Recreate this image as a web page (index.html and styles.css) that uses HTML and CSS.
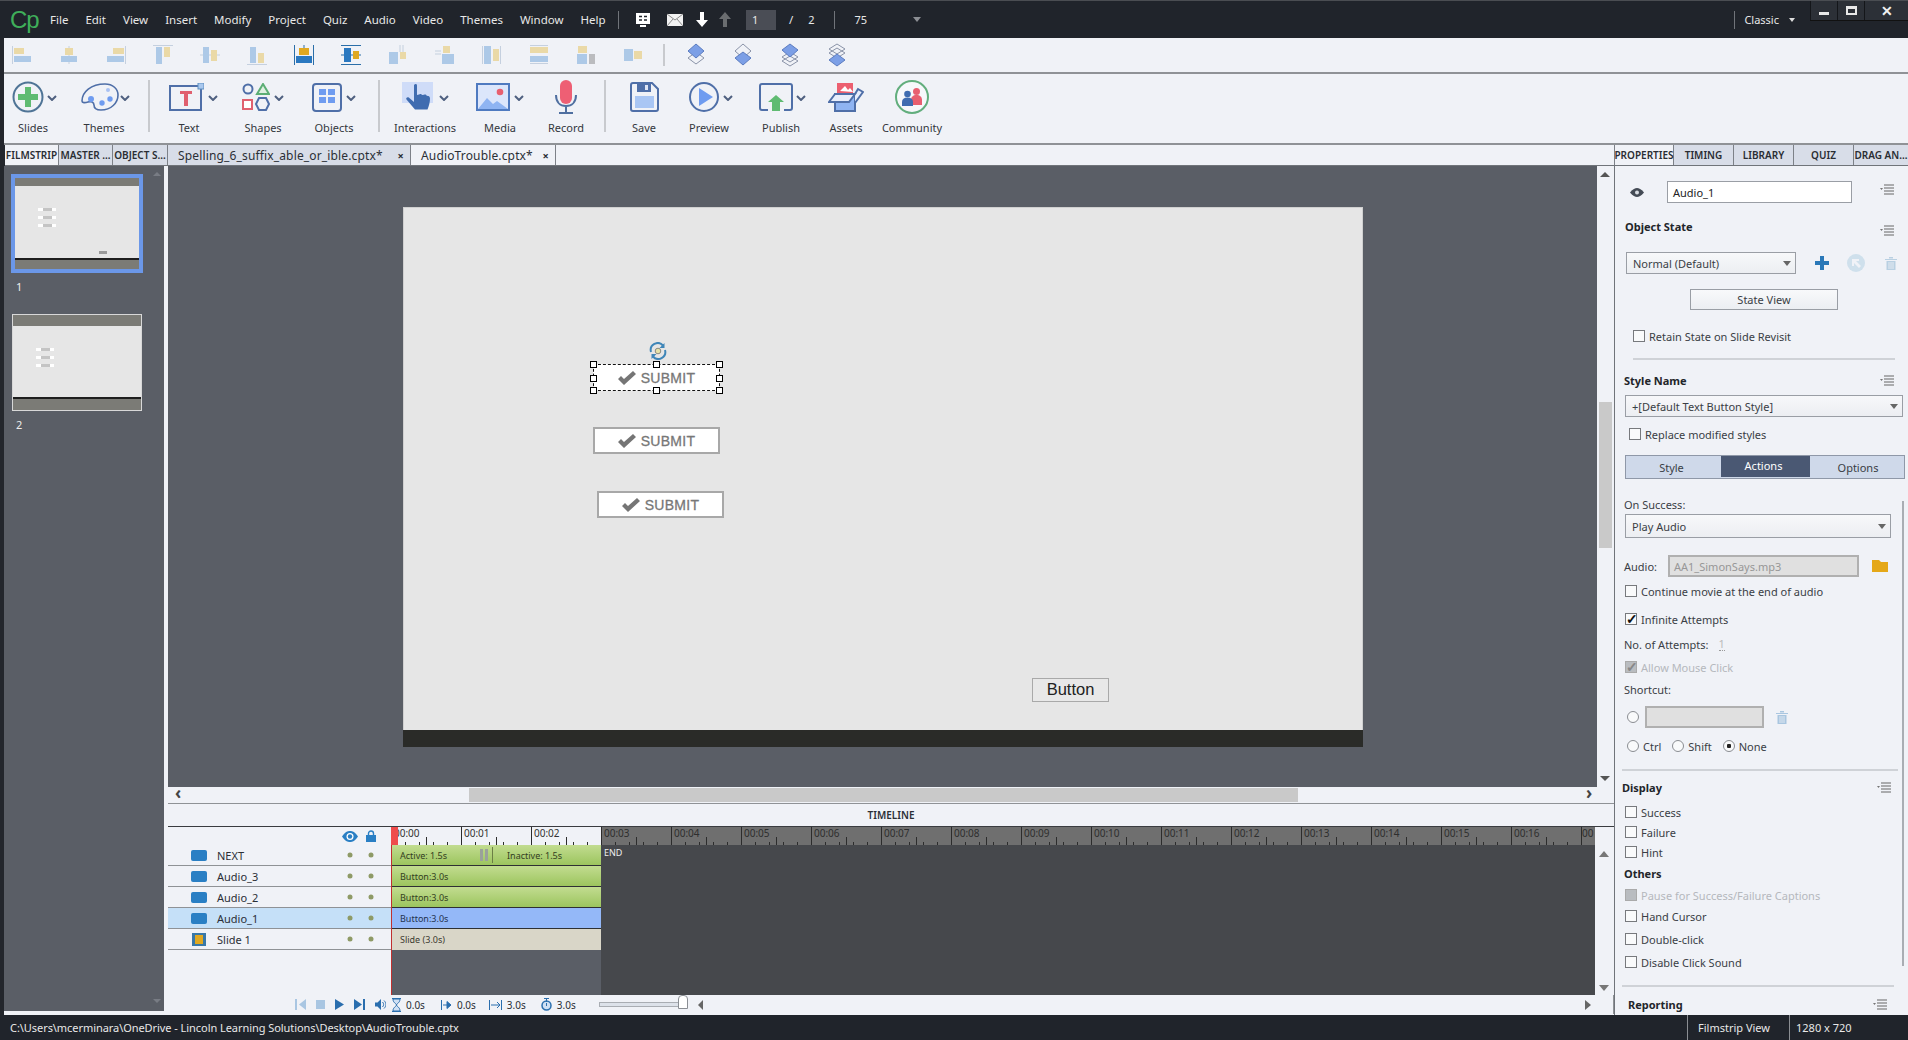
FILE: index.html
```html
<!DOCTYPE html>
<html lang="en">
<head>
  <meta charset="UTF-8">
  <title>Adobe Captivate - AudioTrouble.cptx</title>
  <link rel="stylesheet" href="styles.css">
</head>
<body>
  <svg class="sprite" width="0" height="0">
    <symbol id="chev" viewBox="0 0 10 6"><path d="M1 1l4 4 4-4" fill="none" stroke="#4f6080" stroke-width="2"/></symbol>
    <symbol id="lines" viewBox="0 0 14 11"><path d="M0 4h3L1.500 6z" fill="#777"/><path d="M4 1h10M4 4h10M4 7h10M4 10h10" stroke="#666" stroke-width="1" fill="none"/></symbol>
    <symbol id="trash" viewBox="0 0 12 13"><path d="M0 2h12v1H0zM4 0h4v1.500H4zM1.500 4h9v9h-9z" fill="currentColor"/><path d="M4 5v7M6 5v7M8 5v7" stroke="#f0f2f7" stroke-width=".8"/></symbol>
    <symbol id="check" viewBox="0 0 18 14"><path d="M0 8l3-3 3 3 9-8 3 3L6 14z" fill="#757575"/></symbol>
    <symbol id="rowdot" viewBox="0 0 6 6"><circle cx="3" cy="3" r="2.500" fill="#8e9a66"/></symbol>
  </svg>

  <header class="titlebar">
    <span class="logo">Cp</span>
    <nav class="menu">
      <span>File</span><span>Edit</span><span>View</span><span>Insert</span><span>Modify</span><span>Project</span><span>Quiz</span><span>Audio</span><span>Video</span><span>Themes</span><span>Window</span><span>Help</span>
    </nav>
    <i class="vsep sep-help"></i>
    <svg class="tb-icon tb-slide" width="16" height="16" viewBox="0 0 16 16"><path d="M1 1h14v11H1z" fill="#fff"/><path d="M5 13h6v2H5z" fill="#fff"/><path d="M4 4.500h3M9 4.500h3M4 8h3M9 8h3" stroke="#20242b" stroke-width="1.300"/></svg>
    <svg class="tb-icon tb-mail" width="16" height="14" viewBox="0 0 16 14"><path d="M0 1h16v12H0z" fill="#f2f2f2"/><path d="M0 1l8 6 8-6M0 13l6-7M16 13l-6-7" fill="none" stroke="#8b8b8b"/></svg>
    <svg class="tb-icon tb-down" width="12" height="15" viewBox="0 0 12 15"><path d="M4 0h4v8h4l-6 7-6-7h4z" fill="#fff"/></svg>
    <svg class="tb-icon tb-up" width="12" height="15" viewBox="0 0 12 15"><path d="M4 15h4V7h4L6 0 0 7h4z" fill="#6a6d70"/></svg>
    <span class="page-box">1</span>
    <span class="page-of">/</span>
    <span class="page-total">2</span>
    <i class="vsep sep-page"></i>
    <span class="zoom-val">75</span>
    <span class="caret caret-zoom"></span>
    <span class="spacer"></span>
    <i class="vsep sep-classic"></i>
    <span class="classic">Classic</span>
    <span class="caret caret-classic"></span>
    <div class="winbtns">
      <span class="winbtn"><i class="win-min"></i></span>
      <span class="winbtn"><i class="win-max"></i></span>
      <span class="winbtn win-x">✕</span>
    </div>
  </header>

  <div class="aligns">
    <svg class="faded" viewBox="0 0 20 20"><path d="M.500 1v18" stroke="#9cb0c8"/><rect x="2" y="3" width="10" height="6" fill="#e6c15a"/><rect x="2" y="11" width="17" height="6" fill="#6ca2d8"/></svg>
    <svg class="faded" viewBox="0 0 20 20"><path d="M10 1v18" stroke="#9cb0c8"/><rect x="6" y="3" width="8" height="7" fill="#e6c15a"/><rect x="2" y="11" width="16" height="6" fill="#6ca2d8"/></svg>
    <svg class="faded" viewBox="0 0 20 20"><path d="M19.500 1v18" stroke="#9cb0c8"/><rect x="7" y="3" width="11" height="6" fill="#e6c15a"/><rect x="1" y="11" width="17" height="6" fill="#6ca2d8"/></svg>
    <svg class="faded" viewBox="0 0 20 20"><path d="M0 .500h20" stroke="#9cb0c8"/><rect x="3" y="2" width="6" height="17" fill="#6ca2d8"/><rect x="11" y="2" width="6" height="10" fill="#e6c15a"/></svg>
    <svg class="faded" viewBox="0 0 20 20"><path d="M0 10h20" stroke="#9cb0c8"/><rect x="3" y="2" width="6" height="16" fill="#6ca2d8"/><rect x="11" y="5" width="6" height="11" fill="#e6c15a"/></svg>
    <svg class="faded" viewBox="0 0 20 20"><path d="M0 19.500h20" stroke="#9cb0c8"/><rect x="3" y="2" width="6" height="16" fill="#6ca2d8"/><rect x="11" y="8" width="6" height="10" fill="#e6c15a"/></svg>
    <svg viewBox="0 0 20 20"><path d="M.500 0v20M19.500 0v20M10 0v3" stroke="#2b6ea8"/><rect x="5" y="3" width="10" height="7" fill="#e0a820"/><rect x="2" y="11" width="16" height="7" fill="#2a78c0"/></svg>
    <svg viewBox="0 0 20 20"><path d="M0 .500h20M0 19.500h20M0 10h20" stroke="#2b6ea8"/><rect x="3" y="3" width="7" height="14" fill="#2a78c0"/><rect x="12" y="6" width="6" height="8" fill="#e0a820"/></svg>
    <svg class="faded" viewBox="0 0 20 20"><path d="M12 0v7M15 0v7" stroke="#9cb0c8"/><rect x="1" y="7" width="9" height="12" fill="#6ca2d8"/><rect x="12" y="7" width="6" height="7" fill="#e6c15a"/></svg>
    <svg class="faded" viewBox="0 0 20 20"><path d="M0 6h6M0 9h6" stroke="#9cb0c8"/><rect x="8" y="1" width="7" height="7" fill="#e6c15a"/><rect x="7" y="9" width="12" height="10" fill="#6ca2d8"/></svg>
    <svg class="faded" viewBox="0 0 20 20"><path d="M.500 1v18M18.500 1v18" stroke="#9cb0c8"/><rect x="2" y="1" width="7" height="18" fill="#6ca2d8"/><rect x="11" y="4" width="6" height="12" fill="#e6c15a"/></svg>
    <svg class="faded" viewBox="0 0 20 20"><path d="M1 .500h18M1 18.500h18" stroke="#9cb0c8"/><rect x="1" y="2" width="18" height="6" fill="#e6c15a"/><rect x="1" y="11" width="18" height="6" fill="#6ca2d8"/></svg>
    <svg class="faded" viewBox="0 0 20 20"><rect x="2" y="1" width="9" height="7" fill="#e6c15a"/><rect x="1" y="9" width="10" height="10" fill="#6ca2d8"/><rect x="13" y="9" width="6" height="10" fill="#888"/></svg>
    <svg class="faded" viewBox="0 0 20 20"><rect x="1" y="4" width="9" height="12" fill="#6ca2d8"/><rect x="11" y="6" width="8" height="8" fill="#e6c15a"/></svg>
    <i class="vsep-light sep-align"></i>
    <svg class="layer" viewBox="0 0 20 24"><path d="M10 9l8 6-8 6-8-6z" fill="none" stroke="#8a93a8"/><path d="M10 1l8 7-8 7-8-7z" fill="#7c9fe6" stroke="#5b7cc0"/></svg>
    <svg class="layer" viewBox="0 0 20 24"><path d="M10 1l8 7-8 7-8-7z" fill="none" stroke="#8a93a8"/><path d="M10 9l8 6-8 7-8-7z" fill="#7c9fe6" stroke="#5b7cc0"/></svg>
    <svg class="layer" viewBox="0 0 20 24"><path d="M10 13l8 5-8 5-8-5zM10 9l8 5-8 5-8-5z" fill="none" stroke="#8a93a8"/><path d="M10 1l8 6-8 7-8-7z" fill="#7c9fe6" stroke="#5b7cc0"/></svg>
    <svg class="layer" viewBox="0 0 20 24"><path d="M10 1l8 5-8 5-8-5zM10 5l8 5-8 5-8-5z" fill="none" stroke="#8a93a8"/><path d="M10 11l8 6-8 6-8-6z" fill="#7c9fe6" stroke="#5b7cc0"/></svg>
  </div>

  <div class="ribbon">
    <div class="tool t-slides"><div class="tool-ic">
      <svg width="32" height="32" viewBox="0 0 32 32"><circle cx="16" cy="16" r="14.500" fill="none" stroke="#4f7496" stroke-width="2"/><path d="M13 6h6v7h7v6h-7v7h-6v-7H6v-6h7z" fill="#5fbb72"/></svg>
      <svg class="chev"><use href="#chev"/></svg></div><span>Slides</span></div>
    <div class="tool t-themes"><div class="tool-ic">
      <svg width="38" height="28" viewBox="0 0 38 28"><path d="M1 18C1 9 10 1 24 1c8 0 13 5 13 11 0 8-7 15-17 15-6 0-7-3-7-5 0-3-3-4-6-3-3 1-6 1-6-1z" fill="#f0f2f7" stroke="#4f6fa8" stroke-width="1.600"/><circle cx="10" cy="18" r="3" fill="#6f9cf0" transform="translate(0 -2)"/><circle cx="21" cy="20" r="2.700" fill="#6f9cf0"/><circle cx="29" cy="16" r="2.700" fill="#6f9cf0"/><circle cx="27" cy="7" r="2" fill="#a9c2f4"/></svg>
      <svg class="chev"><use href="#chev"/></svg></div><span>Themes</span></div>
    <i class="vsep-light rib-sep"></i>
    <div class="tool t-text"><div class="tool-ic">
      <svg width="35" height="28" viewBox="0 0 35 28"><rect x="1" y="3" width="31" height="24" fill="none" stroke="#4f6fa8" stroke-width="2"/><path d="M11 8h12v3h-4v12h-4V11h-4z" fill="#e0606f"/><rect x="29" y="0" width="6" height="6" fill="#a9c8ee" stroke="#5f8fc0"/></svg>
      <svg class="chev"><use href="#chev"/></svg></div><span>Text</span></div>
    <div class="tool t-shapes"><div class="tool-ic">
      <svg width="28" height="28" viewBox="0 0 28 28"><circle cx="6" cy="6" r="4.500" fill="none" stroke="#4f6fa8" stroke-width="2"/><path d="M21 1l6 10H15z" fill="#dff0e2" stroke="#5cae75" stroke-width="2"/><rect x="1" y="17" width="9" height="9" fill="#fff" stroke="#e0606f" stroke-width="2"/><path d="M17 15h7l3 6-3 6h-7l-3-6z" fill="none" stroke="#4f6fa8" stroke-width="2"/></svg>
      <svg class="chev"><use href="#chev"/></svg></div><span>Shapes</span></div>
    <div class="tool t-objects"><div class="tool-ic">
      <svg width="30" height="29" viewBox="0 0 30 29"><rect x="1" y="1" width="28" height="27" rx="3" fill="none" stroke="#4f6fa8" stroke-width="2"/><path d="M7 6h7v6H7zM16 6h7v6h-7zM7 14h7v6H7zM16 14h7v6h-7z" fill="#6f9cf0"/></svg>
      <svg class="chev"><use href="#chev"/></svg></div><span>Objects</span></div>
    <i class="vsep-light rib-sep"></i>
    <div class="tool t-inter"><div class="tool-ic">
      <svg width="31" height="30" viewBox="0 0 31 30"><rect y="0" width="31" height="21" fill="#cfdcf8"/><path d="M12 3c1-1.500 3-1.500 3 .5V13l2-.5c1-1 2.500-.5 3 .5l2-.3c1-.7 2.500 0 2.700 1l1.500.2c1.300.3 1.800 1.300 1.800 2.600 0 4-1 7-2.500 11H13l-3-3.500-5.500-6.500c-1-1.500.8-3 2.300-2L12 20z" fill="#3f6cb0"/></svg>
      <svg class="chev"><use href="#chev"/></svg></div><span>Interactions</span></div>
    <div class="tool t-media"><div class="tool-ic">
      <svg width="34" height="28" viewBox="0 0 34 28"><rect x="1" y="1" width="32" height="26" fill="#dce6fb" stroke="#4f7ac0" stroke-width="2"/><path d="M2 26l9-11 6 6 4-3 11 8z" fill="#8fb4f2"/><circle cx="24" cy="9" r="3.300" fill="#e85f70"/></svg>
      <svg class="chev"><use href="#chev"/></svg></div><span>Media</span></div>
    <div class="tool t-record"><div class="tool-ic">
      <svg width="24" height="34" viewBox="0 0 24 34"><rect x="6" y="0" width="12" height="24" rx="6" fill="#ee5f74"/><path d="M2 15c0 7 4 11 10 11s10-4 10-11M12 26v6M5 33h14" fill="none" stroke="#4f6fa0" stroke-width="2"/></svg></div><span>Record</span></div>
    <i class="vsep-light rib-sep"></i>
    <div class="tool t-save"><div class="tool-ic">
      <svg width="29" height="30" viewBox="0 0 29 30"><path d="M1 3c0-1 1-2 2-2h19l6 6v20c0 1-1 2-2 2H3c-1 0-2-1-2-2z" fill="#f0f2f7" stroke="#4f6fa8" stroke-width="2"/><path d="M7 2h14v8H7z" fill="#4f6fa8"/><path d="M15 3h3v5h-3z" fill="#dfe6f5"/><path d="M5 14h19v12H5z" fill="#a9c6f4"/></svg></div><span>Save</span></div>
    <div class="tool t-preview"><div class="tool-ic">
      <svg width="30" height="30" viewBox="0 0 30 30"><circle cx="15" cy="15" r="14" fill="none" stroke="#4f6fa8" stroke-width="2"/><path d="M10 6l14 9-14 9z" fill="#6f9cf0"/></svg>
      <svg class="chev"><use href="#chev"/></svg></div><span>Preview</span></div>
    <div class="tool t-publish"><div class="tool-ic">
      <svg width="34" height="28" viewBox="0 0 34 28"><path d="M9 27H3c-1 0-2-1-2-2V3c0-1 1-2 2-2h28c1 0 2 1 2 2v22c0 1-1 2-2 2h-6" fill="none" stroke="#4f6fa8" stroke-width="2"/><path d="M17 12l8 7h-4v9h-8v-9H9z" fill="#5fbb72"/></svg>
      <svg class="chev"><use href="#chev"/></svg></div><span>Publish</span></div>
    <div class="tool t-assets"><div class="tool-ic">
      <svg width="36" height="29" viewBox="0 0 36 29"><path d="M9 0h16v11H9z" fill="#ec5f70"/><path d="M12 8l5-5 3 4 2-2 3 4z" fill="#fff"/><path d="M7 11h20v17H7z" fill="#8fb4f2" stroke="#4f6fa8" stroke-width="2"/><path d="M7 11L1 19h20l6-8zM27 11l3-5 5 3-8 11" fill="#e8eefb" stroke="#4f6fa8" stroke-width="2"/></svg></div><span>Assets</span></div>
    <div class="tool t-comm"><div class="tool-ic">
      <svg width="34" height="34" viewBox="0 0 34 34"><circle cx="17" cy="17" r="16" fill="#f6f8fb" stroke="#62ae7d" stroke-width="2"/><circle cx="21.500" cy="11.500" r="3.500" fill="#e85f70"/><path d="M16 25v-5c0-3 2-5 5.500-5s5.500 2 5.500 5v5z" fill="#e85f70"/><circle cx="12.500" cy="14" r="3.300" fill="#3f6cb0"/><path d="M7 26v-4c0-3 2-4.500 5.500-4.500S18 19 18 22v4z" fill="#3f6cb0"/></svg></div><span>Community</span></div>
  </div>

  <div class="tabrow">
    <span class="ptab ptab-on">FILMSTRIP</span><span class="ptab">MASTER ...</span><span class="ptab ptab-obj">OBJECT S...</span>
    <span class="doctab doctab-off">Spelling_6_suffix_able_or_ible.cptx*<b>×</b></span>
    <span class="doctab doctab-cur">AudioTrouble.cptx*<b>×</b></span>
    <span class="spacer"></span>
    <span class="rtab rtab-on">PROPERTIES</span><span class="rtab">TIMING</span><span class="rtab">LIBRARY</span><span class="rtab">QUIZ</span><span class="rtab rtab-last">DRAG AN...</span>
  </div>

  <main class="workspace">
    <aside class="filmstrip">
      <div class="thumb thumb-on">
        <i class="th-band"></i>
        <div class="th-slide"><i></i><i></i><i></i><em></em></div>
        <i class="th-bar"></i>
        <i class="th-band th-bottom"></i>
      </div>
      <span class="th-num">1</span>
      <div class="thumb thumb-two">
        <i class="th-band"></i>
        <div class="th-slide"><i></i><i></i><i></i></div>
        <i class="th-bar"></i>
        <i class="th-band th-bottom"></i>
      </div>
      <span class="th-num">2</span>
      <span class="film-up"></span>
      <span class="film-down"></span>
    </aside>

    <section class="center">
      <div class="canvas-row">
        <div class="canvas">
          <div class="slide">
            <svg class="rotate" width="18" height="18" viewBox="0 0 18 18"><path d="M2 10A7 7 0 0 1 14 3.500M16 8A7 7 0 0 1 4 14.500" fill="none" stroke="#3f86b8" stroke-width="2"/><path d="M15.500 1v5h-5zM2.500 17v-5h5z" fill="#3f86b8"/><circle cx="9" cy="9" r="2.800" fill="#e6e2a8" stroke="#8a8a80"/></svg>
            <div class="submit s1"><svg width="18" height="14"><use href="#check"/></svg>SUBMIT
              <i class="h tl"></i><i class="h tm"></i><i class="h tr"></i><i class="h ml"></i><i class="h mr"></i><i class="h bl"></i><i class="h bm"></i><i class="h br"></i>
            </div>
            <div class="submit s2"><svg width="18" height="14"><use href="#check"/></svg>SUBMIT</div>
            <div class="submit s3"><svg width="18" height="14"><use href="#check"/></svg>SUBMIT</div>
            <div class="plainbtn">Button</div>
            <div class="slidebar"></div>
          </div>
        </div>
        <div class="vscroll">
          <span class="arr-up"></span>
          <div class="vthumb"></div>
          <span class="arr-down"></span>
        </div>
      </div>
      <div class="hscroll">
        <span class="chev-l">‹</span>
        <div class="hthumb"></div>
        <span class="chev-r">›</span>
      </div>
      <div class="tl-title">TIMELINE</div>
      <div class="tl-body">
        <div class="layers">
          <div class="layer-head">
            <svg width="16" height="11" viewBox="0 0 16 11"><path d="M0 5.500C3 1 5.500 0 8 0s5 1 8 5.500C13 10 10.500 11 8 11S3 10 0 5.500z" fill="#2a7fc4"/><circle cx="8" cy="5.500" r="3.500" fill="#fff"/><circle cx="8" cy="5.500" r="2.200" fill="#2a7fc4"/></svg>
            <svg width="10" height="12" viewBox="0 0 10 12"><path d="M2.500 5V3.500a2.500 2.500 0 0 1 5 0V5" fill="none" stroke="#2a7fc4" stroke-width="1.400"/><path d="M0 5h10v7H0z" fill="#2a7fc4"/></svg>
          </div>
          <div class="lrow"><i class="swatch"></i><span>NEXT</span><svg width="6" height="6"><use href="#rowdot"/></svg><svg width="6" height="6"><use href="#rowdot"/></svg></div>
          <div class="lrow"><i class="swatch"></i><span>Audio_3</span><svg width="6" height="6"><use href="#rowdot"/></svg><svg width="6" height="6"><use href="#rowdot"/></svg></div>
          <div class="lrow"><i class="swatch"></i><span>Audio_2</span><svg width="6" height="6"><use href="#rowdot"/></svg><svg width="6" height="6"><use href="#rowdot"/></svg></div>
          <div class="lrow lrow-on"><i class="swatch"></i><span>Audio_1</span><svg width="6" height="6"><use href="#rowdot"/></svg><svg width="6" height="6"><use href="#rowdot"/></svg></div>
          <div class="lrow"><i class="swatch swatch-slide"></i><span>Slide 1</span><svg width="6" height="6"><use href="#rowdot"/></svg><svg width="6" height="6"><use href="#rowdot"/></svg></div>
        </div>
        <div class="tracks">
          <div class="ruler">
            <span>00:00</span><span>00:01</span><span>00:02</span>
            <span class="past">00:03</span><span class="past">00:04</span><span class="past">00:05</span><span class="past">00:06</span><span class="past">00:07</span><span class="past">00:08</span><span class="past">00:09</span><span class="past">00:10</span><span class="past">00:11</span><span class="past">00:12</span><span class="past">00:13</span><span class="past">00:14</span><span class="past">00:15</span><span class="past">00:16</span><span class="past past-cut">00</span>
          </div>
          <div class="lanes">
            <div class="clips">
              <div class="clip clip-green clip-next"><span>Active: 1.5s</span><i class="pausebars"></i><i class="clipline"></i><span>Inactive: 1.5s</span></div>
              <div class="clip clip-green">Button:3.0s</div>
              <div class="clip clip-green">Button:3.0s</div>
              <div class="clip clip-blue">Button:3.0s</div>
              <div class="clip clip-slide">Slide (3.0s)</div>
            </div>
            <div class="after"><span>END</span></div>
          </div>
          <i class="playhead"></i>
          <i class="playflag"></i>
        </div>
        <div class="tl-vscroll"><span class="arr-up"></span><span class="arr-down"></span></div>
      </div>
      <div class="tl-foot">
        <div class="tl-play">
          <svg width="11" height="11" viewBox="0 0 11 11"><path d="M0 0h2v11H0zM11 0v11L4 5.500z" fill="#a9c6e2"/></svg>
          <svg width="9" height="9" viewBox="0 0 9 9"><path d="M0 0h9v9H0z" fill="#a9c6e2"/></svg>
          <svg width="9" height="11" viewBox="0 0 9 11"><path d="M0 0l9 5.500L0 11z" fill="#2a6eae"/></svg>
          <svg width="11" height="11" viewBox="0 0 11 11"><path d="M0 0l8 5.500L0 11zM9 0h2v11H9z" fill="#2a6eae"/></svg>
          <svg width="11" height="11" viewBox="0 0 11 11"><path d="M0 3.500h2.500L6 0v11L2.500 7.500H0z" fill="#2a6eae"/><path d="M7.500 3c1.500 1.500 1.500 3.500 0 5M9 1.500c2.500 2.500 2.500 5.500 0 8" fill="none" stroke="#2a6eae"/></svg>
        </div>
        <div class="tl-stats">
          <svg class="st-a" width="9" height="14" viewBox="0 0 9 14"><path d="M0 .500h9M0 13.500h9M1 1c0 4 3 4 3.500 6C4 9 1 9 1 13h7c0-4-3-4-3.500-6C5 5 8 5 8 1z" fill="#cfe0f4" stroke="#2a6eae"/></svg><span>0.0s</span>
          <svg class="st-b" width="11" height="10" viewBox="0 0 11 10"><path d="M.500 0v10M2 5h5M6 1.500L10 5 6 8.500z" fill="#2a6eae" stroke="#2a6eae"/></svg><span>0.0s</span>
          <svg class="st-c" width="13" height="10" viewBox="0 0 13 10"><path d="M.500 0v10M12.500 0v10M2 5h9M8 2l3 3-3 3" fill="none" stroke="#2a6eae"/></svg><span>3.0s</span>
          <svg class="st-d" width="11" height="13" viewBox="0 0 11 13"><circle cx="5.500" cy="7.500" r="4.500" fill="#cfe0f4" stroke="#2a6eae" stroke-width="1.500"/><path d="M3 .500h5M5.500 1v3M5.500 5v3" stroke="#2a6eae"/></svg><span>3.0s</span>
          <div class="zoomtrack"><i></i></div>
          <span class="tri-l"></span>
        </div>
        <span class="tri-r"></span>
      </div>
    </section>

    <aside class="props">
      <div class="row r-name g15">
        <svg class="eye" width="14" height="9" viewBox="0 0 14 9"><path d="M0 4.500C3 1 5 0 7 0s4 1 7 4.500C11 8 9 9 7 9S3 8 0 4.500z" fill="#444b55"/><circle cx="7" cy="4.500" r="2" fill="#d9dde3"/></svg>
        <span class="input input-name">Audio_1</span>
        <svg class="lines" width="14" height="11"><use href="#lines"/></svg>
      </div>
      <div class="row g15 pl10"><b class="head">Object State</b><svg class="lines lines-low" width="14" height="11"><use href="#lines"/></svg></div>
      <div class="row r22 g18">
        <span class="select sel-state">Normal (Default)</span>
        <svg class="st-plus" width="14" height="14" viewBox="0 0 14 14"><path d="M5 0h4v5h5v4H9v5H5V9H0V5h5z" fill="#2a78b8"/></svg>
        <svg class="st-circ" width="18" height="18" viewBox="0 0 18 18"><circle cx="9" cy="9" r="9" fill="#cfe0ec"/><path d="M5 5h7v2H9l5 5-2 2-5-5v3H5z" fill="#f0f2f7"/></svg>
        <svg class="st-trash" width="12" height="13"><use href="#trash"/></svg>
      </div>
      <div class="row g15 r21"><span class="btn btn-state">State View</span></div>
      <div class="row g18 pl18"><i class="cb"></i><span>Retain State on Slide Revisit</span></div>
      <i class="rule rule-a g14"></i>
      <div class="row g12 pl9"><b class="head">Style Name</b><svg class="lines" width="14" height="11"><use href="#lines"/></svg></div>
      <div class="row r22 g7"><span class="select sel-style">+[Default Text Button Style]</span></div>
      <div class="row g9 pl14"><i class="cb"></i><span>Replace modified styles</span></div>
      <div class="seg g13"><span class="seg-l">Style</span><span class="seg-on">Actions</span><span>Options</span></div>
      <div class="row g17 pl9"><span>On Success:</span></div>
      <div class="row r24 g2"><span class="select sel-success">Play Audio</span></div>
      <div class="row r22 g17 pl9"><span class="lbl-audio">Audio:</span><span class="input input-off">AA1_SimonSays.mp3</span>
        <svg class="folder" width="16" height="12" viewBox="0 0 16 12"><path d="M0 0h7l2 2h7v10H0z" fill="#e5a818"/></svg></div>
      <div class="row g6 pl10"><i class="cb"></i><span>Continue movie at the end of audio</span></div>
      <div class="row g12 pl10"><i class="cb cb-on">✓</i><span>Infinite Attempts</span></div>
      <div class="row g9 pl9"><span>No. of Attempts:</span><span class="attempts">1</span></div>
      <div class="row g7 pl10 off"><i class="cb cb-dis">✓</i><span>Allow Mouse Click</span></div>
      <div class="row g6 pl9"><span>Shortcut:</span></div>
      <div class="row r22 g9 pl12"><i class="rd"></i><span class="input input-key"></span><svg class="key-trash" width="12" height="13"><use href="#trash"/></svg></div>
      <div class="row g10 pl12 keys"><i class="rd"></i><span>Ctrl</span><i class="rd"></i><span>Shift</span><i class="rd rd-on"></i><span>None</span></div>
      <i class="rule rule-b g15"></i>
      <div class="row g8 pl7"><b class="head">Display</b><svg class="lines lines-b" width="14" height="11"><use href="#lines"/></svg></div>
      <div class="row g9 pl10"><i class="cb"></i><span>Success</span></div>
      <div class="row g4 pl10"><i class="cb"></i><span>Failure</span></div>
      <div class="row g4 pl10"><i class="cb"></i><span>Hint</span></div>
      <div class="row g5 pl9"><b class="head">Others</b></div>
      <div class="row g6 pl10 off"><i class="cb cb-dis"></i><span>Pause for Success/Failure Captions</span></div>
      <div class="row g5 pl10"><i class="cb"></i><span>Hand Cursor</span></div>
      <div class="row g7 pl10"><i class="cb"></i><span>Double-click</span></div>
      <div class="row g7 pl10"><i class="cb"></i><span>Disable Click Sound</span></div>
      <i class="rule rule-c g15"></i>
      <div class="row g9 pl13"><b class="head">Reporting</b><svg class="lines lines-c" width="14" height="11"><use href="#lines"/></svg></div>
      <i class="props-scroll"></i>
    </aside>
  </main>

  <footer class="statusbar">
    <span class="path">C:\Users\mcerminara\OneDrive - Lincoln Learning Solutions\Desktop\AudioTrouble.cptx</span>
    <span class="st-cell st-view">Filmstrip View</span>
    <span class="st-cell st-size">1280 x 720</span>
  </footer>
</body>
</html>
```

FILE: styles.css
```css
* { box-sizing: border-box; }
html, body { height: 100%; }
body {
  margin: 0;
  width: 1908px;
  height: 1040px;
  overflow: hidden;
  display: flex;
  flex-direction: column;
  background: #23262c;
  color: #2b2f36;
  font-family: "Noto Sans", "Open Sans", sans-serif;
  font-size: 11px;
}
i, em { display: block; font-style: normal; }
.sprite { position: absolute; }
.spacer { flex: 1; }

/* title bar */
.titlebar {
  height: 38px;
  flex: none;
  display: flex;
  align-items: center;
  background: #20242b;
  border-top: 1px solid #4a4d52;
  color: #e8e8e8;
  position: relative;
  font-size: 11.500px;
}
.logo {
  width: 50px;
  padding-left: 10px;
  color: #3fae5a;
  font-size: 24px;
  font-family: "Liberation Sans", sans-serif;
  line-height: 1;
  letter-spacing: -1px;
}
.menu { display: flex; gap: 17px; width: 554px; flex: none; }
.vsep { width: 1px; height: 18px; background: #70747a; flex: none; }
.tb-icon { flex: none; }
.sep-help { margin-left: 14px; }
.tb-slide { margin-left: 16px; }
.tb-mail { margin-left: 16px; }
.tb-down { margin-left: 13px; }
.tb-up { margin-left: 11px; }
.page-box {
  width: 30px;
  height: 20px;
  margin-left: 15px;
  padding-left: 6px;
  line-height: 20px;
  background: #4a4d55;
  font-size: 11px;
}
.page-of { margin-left: 13px; }
.page-total { margin-left: 15px; font-size: 11px; }
.sep-page { margin-left: 19px; }
.zoom-val { margin-left: 20px; font-size: 11px; width: 50px; }
.caret { width: 0; height: 0; border: 4px solid transparent; border-top: 5px solid #8b8e93; border-bottom: 0; }
.caret-zoom { margin-left: 8px; }
.sep-classic { margin-right: 9px; }
.classic { font-size: 11px; }
.caret-classic { margin-left: 10px; margin-right: 113px; border-width: 3px; border-top: 4px solid #ddd; border-bottom: 0; }
.winbtns {
  position: absolute;
  top: 0;
  right: 0;
  display: flex;
  height: 20px;
  background: #2c3037;
  border-bottom: 1px solid #111;
}
.winbtn {
  width: 27px;
  display: flex;
  align-items: center;
  justify-content: center;
  border-left: 1px solid #14161a;
  color: #f0f0f0;
}
.win-x { width: 44px; font-size: 14px; font-weight: bold; }
.win-min { width: 10px; height: 3px; background: #e8e8e8; margin-top: 5px; }
.win-max { width: 11px; height: 9px; border: 2px solid #e8e8e8; border-top-width: 3px; }

/* align bar */
.aligns {
  height: 36px;
  flex: none;
  margin-left: 4px;
  padding-left: 8px;
  display: flex;
  align-items: center;
  gap: 27px;
  background: #f0f2f7;
  border-bottom: 2px solid #8f9296;
}
.aligns svg { width: 20px; height: 20px; flex: none; }
.aligns .faded { opacity: .5; }
.aligns .layer { width: 20px; height: 24px; }
.vsep-light { width: 2px; background: #c8cace; flex: none; }
.sep-align { height: 22px; margin: 0 -6px 0 -7px; }

/* ribbon */
.ribbon {
  height: 71px;
  flex: none;
  margin-left: 4px;
  display: grid;
  grid-template-columns: 58px 84px 6px 74px 74px 68px 22px 70px 80px 52px 26px 52px 78px 66px 64px 68px;
  background: #f0f2f7;
  border-bottom: 2px solid #8f9296;
  color: #33373d;
}
.tool { display: flex; flex-direction: column; align-items: center; }
.tool-ic { height: 44px; display: flex; align-items: center; gap: 4px; padding-top: 2px; }
.tool > span { margin-top: 2px; line-height: 16px; }
.chev { width: 10px; height: 6px; margin-top: 2px; }
.rib-sep { height: 52px; margin-top: 6px; justify-self: center; }
.t-text .tool-ic { margin-left: 8px; }
.t-slides .tool-ic { gap: 3px; margin-left: 2px; }
.t-themes .tool-ic { gap: 1px; margin-left: 2px; }
.t-inter .tool-ic { gap: 6px; }
.t-preview .tool-ic { margin-left: 4px; }
.t-publish .tool-ic { gap: 3px; margin-left: 3px; }

/* tab row */
.tabrow {
  height: 21px;
  flex: none;
  margin-left: 5px;
  display: flex;
  background: #f0f2f7;
  border-bottom: 1px solid #70747a;
}
.ptab, .rtab {
  width: 54px;
  display: flex;
  align-items: center;
  justify-content: center;
  font-size: 10px;
  font-weight: 600;
  white-space: nowrap;
  background: #d8dde8;
  border-right: 1px solid #7d8188;
  color: #2a2d33;
}
.ptab-on, .rtab-on { background: #f0f2f7; }
.ptab-obj { width: 55px; }
.doctab {
  display: flex;
  align-items: center;
  justify-content: space-between;
  padding: 0 6px 0 10px;
  font-size: 12px;
  letter-spacing: .15px;
  border-right: 1px solid #7d8188;
  white-space: nowrap;
}
.doctab b { font-size: 11px; }
.doctab-off { width: 243px; background: #d8dde8; }
.doctab-cur { width: 145px; background: #f0f2f7; }
.rtab { width: 60px; }
.rtab-on { width: 60px; border-left: 1px solid #7d8188; }
.rtab-last { width: 54px; border-right: 0; }

/* workspace */
.workspace { height: 849px; flex: none; display: flex; background: #f0f2f7; margin-left: 0; border-left: 4px solid #23262c; }

/* filmstrip */
.filmstrip {
  width: 164px;
  flex: none;
  height: 845px;
  padding: 8px 0 0 6px;
  background: #5a5e66;
  border-left: 1px solid #5a5e66;
  border-right: 4px solid #f0f2f7;
  position: relative;
  color: #eee;
}
.thumb { display: flex; flex-direction: column; width: 132px; height: 99px; }
.thumb-on { border: 4px solid #6b97e8; }
.thumb-two { width: 130px; height: 97px; margin: 20px 0 0 1px; border: 1px solid #d8d8d8; }
.th-band { height: 8px; background: #7b7b76; flex: none; }
.thumb-two .th-band { height: 11px; }
.th-slide { flex: 1; background: #e6e6e6; position: relative; display: flex; flex-direction: column; gap: 5px; padding: 22px 0 0 23px; }
.th-slide i { width: 18px; height: 3px; background: linear-gradient(90deg, #fff 0 5px, #c4c4c4 5px 14px, #fff 14px); }
.th-slide em { position: absolute; right: 32px; bottom: 4px; width: 8px; height: 3px; background: #9a9a9a; }
.th-bar { height: 2px; background: #1e1e1e; flex: none; }
.th-bottom { height: 9px; }
.thumb-two .th-bottom { height: 11px; }
.th-num { display: block; margin: 7px 0 0 5px; line-height: 14px; }
.film-up, .film-down { position: absolute; right: 3px; border: 4px solid transparent; }
.film-up { top: 6px; border-bottom: 4px solid #787c84; border-top: 0; }
.film-down { bottom: 8px; border-top: 4px solid #787c84; border-bottom: 0; }

/* canvas */
.center { width: 1446px; flex: none; display: flex; flex-direction: column; }
.canvas-row { height: 621px; flex: none; display: flex; }
.canvas { flex: 1; background: #5a5e66; padding: 41px 0 0 235px; }
.slide { width: 960px; height: 540px; background: #e6e6e6; position: relative; border: 1px solid #d0d0d0; }
.slidebar { position: absolute; left: -1px; right: -1px; bottom: -1px; height: 17px; background: #2a2b28; }
.submit {
  position: absolute;
  width: 127px;
  height: 27px;
  display: flex;
  align-items: center;
  justify-content: center;
  gap: 5px;
  background: #fff;
  border: 2px solid #a8a8a8;
  color: #777;
  font: 14px "Liberation Sans", sans-serif;
  letter-spacing: .3px;
  -webkit-text-stroke: .3px #777;
}
.s1 { left: 189px; top: 156px; border: 1px dashed #111; }
.s2 { left: 189px; top: 219px; }
.s3 { left: 193px; top: 283px; }
.h { position: absolute; width: 7px; height: 7px; background: #fff; border: 1px solid #000; }
.tl { left: -4px; top: -4px; }
.tm { left: 59px; top: -4px; }
.tr { right: -4px; top: -4px; }
.ml { left: -4px; top: 10px; }
.mr { right: -4px; top: 10px; }
.bl { left: -4px; bottom: -4px; }
.bm { left: 59px; bottom: -4px; }
.br { right: -4px; bottom: -4px; }
.rotate { position: absolute; left: 245px; top: 134px; }
.plainbtn {
  position: absolute;
  left: 628px;
  top: 470px;
  width: 77px;
  height: 24px;
  padding-bottom: 2px;
  display: flex;
  align-items: center;
  justify-content: center;
  background: #e8e8e8;
  border: 1px solid #a9a9a9;
  color: #222;
  font: 16.500px "Liberation Sans", sans-serif;
}
.vscroll { width: 17px; flex: none; position: relative; background: #f0f2f7; }
.vthumb { position: absolute; top: 236px; left: 2px; width: 13px; height: 146px; background: #c9c9c9; }
.arr-up, .arr-down { position: absolute; left: 3px; border: 5px solid transparent; }
.vscroll .arr-up { top: 6px; border-bottom: 5px solid #555; border-top: 0; }
.vscroll .arr-down { bottom: 6px; border-top: 5px solid #555; border-bottom: 0; }
.hscroll { height: 17px; flex: none; position: relative; background: #f0f2f7; border-bottom: 1px solid #8f9296; }
.hthumb { position: absolute; left: 301px; top: 1px; width: 829px; height: 14px; background: #c9c9c9; }
.chev-l, .chev-r { position: absolute; top: -4px; font-size: 17px; font-weight: 700; color: #444; line-height: 20px; }
.chev-l { left: 7px; }
.chev-r { left: 1418px; }

/* timeline */
.tl-title {
  height: 23px;
  flex: none;
  display: flex;
  align-items: center;
  justify-content: center;
  font-size: 10px;
  font-weight: 600;
  background: #f0f2f7;
  border-bottom: 1px solid #3a3c40;
}
.tl-body { height: 168px; flex: none; display: flex; }
.layers { width: 223px; flex: none; background: #f0f2f7; }
.layer-head { height: 18px; display: flex; align-items: center; gap: 8px; padding-left: 174px; }
.lrow { height: 21px; display: flex; align-items: center; border-bottom: 1px solid #8f9296; padding-left: 23px; font-size: 11px; }
.lrow span { width: 130px; margin-left: 10px; }
.lrow svg { margin-right: 15px; flex: none; }
.lrow-on { background: #c5e0f8; }
.swatch { width: 16px; height: 11px; border-radius: 2px; background: #2a7fc4; flex: none; }
.swatch-slide { background: #e0a820; border: 3px solid #3878a8; border-top-width: 2px; border-bottom-width: 2px; border-radius: 0; height: 13px; width: 14px; margin-left: 1px; margin-right: 1px; }
.tracks { width: 1204px; flex: none; position: relative; display: flex; flex-direction: column; overflow: hidden; }
.ruler { height: 18px; flex: none; display: flex; }
.ruler span {
  width: 70px;
  flex: none;
  padding-left: 3px;
  font-size: 10px;
  line-height: 13px;
  color: #333;
  background:
    linear-gradient(#2c2c2c, #2c2c2c) 0 0 / 1px 100% no-repeat,
    linear-gradient(#2c2c2c, #2c2c2c) 35px 100% / 1px 8px no-repeat,
    repeating-linear-gradient(90deg, #2c2c2c 0 1px, transparent 1px 14px) 0 100% / 100% 3px no-repeat,
    #f0f2f7;
}
.ruler .past {
  color: #2e2e2e;
  background:
    linear-gradient(#2c2c2c, #2c2c2c) 0 0 / 1px 100% no-repeat,
    linear-gradient(#2c2c2c, #2c2c2c) 35px 100% / 1px 8px no-repeat,
    repeating-linear-gradient(90deg, #2c2c2c 0 1px, transparent 1px 14px) 0 100% / 100% 3px no-repeat,
    #6f6f6f;
}
.ruler .past-cut { width: 14px; padding-left: 1px; }
.lanes { flex: 1; display: flex; }
.clips { width: 210px; flex: none; background: #5a5e66; }
.clip {
  height: 21px;
  padding: 0 0 0 9px;
  display: flex;
  align-items: center;
  font-size: 9px;
  color: #33401f;
  border-bottom: 1px solid #2e3033;
}
.clip-green { background: linear-gradient(#c2dc90, #9cc55e); }
.clip-blue { background: #94b8f8; color: #23324f; }
.clip-slide { background: #d9d6c8; color: #3b3a30; border-bottom: 0; }
.clip-next span:last-child { margin-left: 14px; }
.pausebars { width: 8px; height: 12px; margin-left: 33px; border-left: 3px solid #9aa29a; border-right: 3px solid #9aa29a; }
.clipline { width: 1px; height: 16px; background: #6b7f45; margin-left: 4px; }
.after { flex: 1; background: #46484c; color: #eee; font-size: 9px; padding: 1px 0 0 3px; }
.playhead { position: absolute; left: 0; top: 0; bottom: 0; width: 1px; background: #c03030; }
.playflag { position: absolute; left: 0; top: 0; width: 7px; height: 18px; background: #ee4c4c; }
.tl-vscroll { flex: 1; position: relative; background: #f0f2f7; }
.tl-vscroll .arr-up { top: 24px; left: 4px; border-bottom: 6px solid #777; border-top: 0; }
.tl-vscroll .arr-down { bottom: 4px; left: 4px; border-top: 6px solid #777; border-bottom: 0; }
.tl-foot { height: 19px; flex: none; display: flex; align-items: center; position: relative; background: #f0f2f7; border-right: 1px solid #8f9296; }
.tl-play { width: 223px; flex: none; display: flex; align-items: center; justify-content: flex-end; gap: 10px; padding-right: 5px; }
.tl-stats { display: flex; align-items: center; padding-left: 1px; font-size: 10px; }
.tl-stats span { margin-left: 5px; }
.st-b { margin-left: 16px; }
.st-c { margin-left: 13px; }
.st-d { margin-left: 15px; }
.zoomtrack { width: 86px; height: 5px; margin-left: 23px; background: #dde2ea; border: 1px solid #a9adb3; position: relative; }
.zoomtrack i { position: absolute; right: -4px; top: -8px; width: 10px; height: 14px; background: #fff; border: 1px solid #8a8e94; border-radius: 4px 4px 0 0; }
.tl-stats .tri-l { margin-left: 13px; border: 5px solid transparent; border-right: 5px solid #666; border-left: 0; }
.tri-r { position: absolute; left: 1417px; top: 5px; border: 5px solid transparent; border-left: 6px solid #666; border-right: 0; }

/* properties panel */
.props { width: 290px; flex: none; border-left: 1px solid #70747a; display: flex; flex-direction: column; position: relative; background: #f0f2f7; font-size: 11px; color: #3a3e45; }
.row { display: flex; align-items: center; height: 16px; flex: none; white-space: nowrap; position: relative; }
.r21 { height: 21px; }
.r22 { height: 22px; }
.r24 { height: 24px; }
.g2 { margin-top: 2px; }
.g4 { margin-top: 4px; }
.g5 { margin-top: 5px; }
.g6 { margin-top: 6px; }
.g7 { margin-top: 7px; }
.g8 { margin-top: 8px; }
.g9 { margin-top: 9px; }
.g10 { margin-top: 10px; }
.g12 { margin-top: 12px; }
.g13 { margin-top: 13px; }
.g14 { margin-top: 14px; }
.g15 { margin-top: 15px; }
.g17 { margin-top: 17px; }
.g18 { margin-top: 18px; }
.pl7 { padding-left: 7px; }
.pl9 { padding-left: 9px; }
.pl10 { padding-left: 10px; }
.pl12 { padding-left: 12px; }
.pl13 { padding-left: 13px; }
.pl14 { padding-left: 14px; }
.pl18 { padding-left: 18px; }
.head { font-weight: 700; color: #22252a; }
.lines { position: absolute; right: 10px; top: 3px; }
.lines-low { top: 7px; }
.lines-b { right: 13px; }
.lines-c { right: 17px; }
.input { display: flex; align-items: center; height: 22px; padding-left: 5px; background: #fff; border: 1px solid #9a9ea5; flex: none; }
.r-name { height: 22px; }
.eye { margin-left: 15px; }
.input-name { width: 185px; margin-left: 23px; color: #222; }
.select {
  position: relative;
  display: flex;
  align-items: center;
  height: 100%;
  flex: none;
  padding-left: 6px;
  background: linear-gradient(#f7f8fa, #eceef2);
  border: 1px solid #9a9ea5;
}
.select::after { content: ""; position: absolute; right: 4px; top: 50%; margin-top: -2px; border: 4px solid transparent; border-top: 5px solid #666; border-bottom: 0; }
.sel-state { width: 170px; margin-left: 11px; }
.sel-style { width: 278px; margin-left: 10px; }
.sel-success { width: 266px; margin-left: 10px; }
.st-plus { margin-left: 19px; }
.st-circ { margin-left: 18px; }
.st-trash { margin-left: 20px; color: #b9d0e2; }
.btn { display: flex; align-items: center; justify-content: center; width: 148px; height: 21px; margin-left: 75px; background: linear-gradient(#f8f9fb, #eceef2); border: 1px solid #9a9ea5; }
.rule { height: 2px; flex: none; background: #cfd2d7; }
.rule-a { width: 262px; margin-left: 18px; }
.rule-b { width: 276px; margin-left: 7px; }
.rule-c { width: 272px; margin-left: 7px; }
.cb { width: 12px; height: 12px; margin-right: 4px; flex: none; background: #f9fafb; border: 1px solid #77797d; color: #111; font-size: 14px; font-weight: 700; line-height: 9px; }
.cb-dis { background: #b9bcc0; border-color: #aaa; color: #888; }
.off { color: #b5b8bd; }
.seg { width: 280px; height: 24px; margin-left: 10px; flex: none; display: grid; grid-template-columns: 95px 89px 96px; align-items: center; text-align: center; background: #cfd9ea; border: 1px solid #8f98a8; }
.seg-l { padding-right: 4px; }
.seg-on { height: 21px; line-height: 19px; padding-right: 4px; background: #4a5873; color: #fff; margin-top: -1px; }
.lbl-audio { width: 44px; flex: none; }
.input-off { width: 191px; background: #e0e0e0; color: #979797; border: 2px solid #b0b0b0; padding-left: 4px; }
.folder { margin-left: 13px; }
.attempts { margin-left: 10px; color: #bbb; border-bottom: 1px dotted #999; line-height: 13px; }
.rd { width: 12px; height: 12px; border-radius: 50%; flex: none; background: #f9fafb; border: 1px solid #8a8d92; margin-right: 4px; }
.rd-on { background: radial-gradient(circle, #222 0 2px, #f9fafb 2.500px); }
.input-key { width: 119px; background: #e0e0e0; border: 2px solid #b0b0b0; margin-left: 2px; }
.key-trash { margin-left: 12px; color: #a9c6e0; }
.keys span { margin-right: 11px; }
.props-scroll { position: absolute; right: 0; top: 335px; width: 2px; height: 465px; background: #a9adb3; }

/* status bar */
.statusbar {
  height: 25px;
  flex: none;
  display: flex;
  align-items: center;
  padding-left: 10px;
  background: #20242b;
  color: #e8e8e8;
  font-size: 11px;
}
.path { width: 1677px; flex: none; white-space: nowrap; letter-spacing: -.06px; }
.st-cell { height: 100%; display: flex; align-items: center; border-left: 1px solid #8b8e93; }
.st-view { width: 102px; padding-left: 10px; }
.st-size { padding-left: 6px; }
```
